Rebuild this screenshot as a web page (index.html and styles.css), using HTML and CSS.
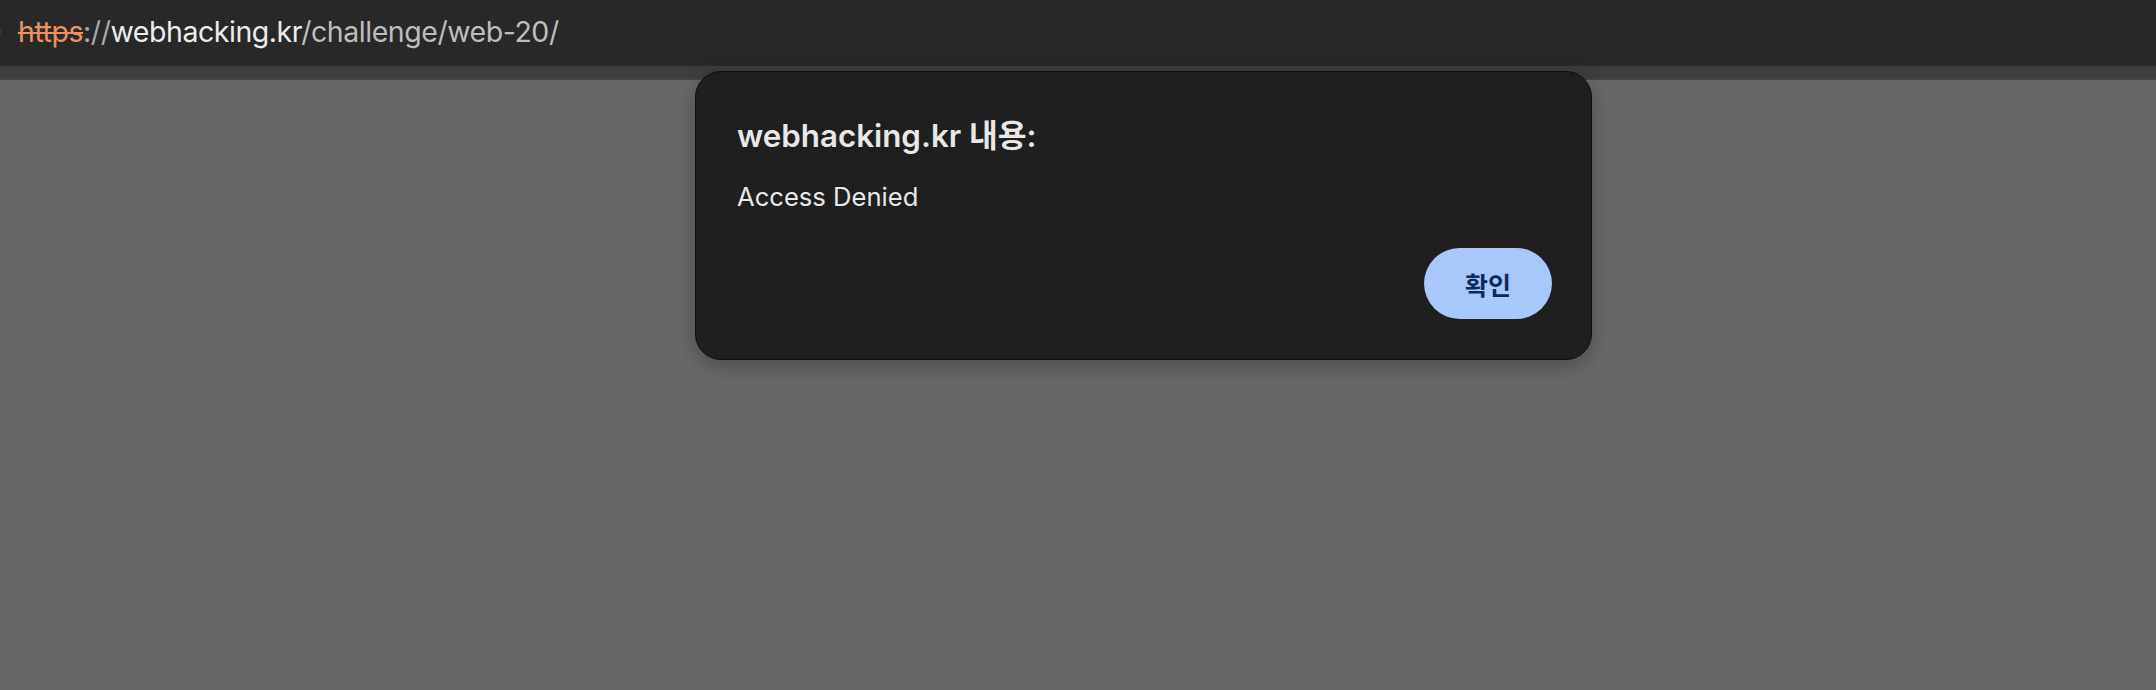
FILE: index.html
```html
<!DOCTYPE html>
<html lang="ko">
<head>
<meta charset="utf-8">
<title>webhacking.kr</title>
<link rel="stylesheet" href="styles.css">
</head>
<body>
  <header class="toolbar">
    <div class="omnibox">
      <svg class="site-icon" width="24" height="24" viewBox="0 0 24 24"><circle cx="12" cy="12" r="9" fill="none" stroke="#3c3c3c" stroke-width="2"/></svg>
      <span class="url"><span class="scheme">https</span><span class="sep">://</span><span class="host">webhacking.kr</span><span class="path">/challenge/web-20/</span></span>
    </div>
  </header>
  <div class="strip"></div>
  <main class="page"></main>

  <div class="dialog" role="alertdialog">
    <h1 class="dialog-title">webhacking.kr 내용:</h1>
    <p class="dialog-message">Access Denied</p>
    <div class="dialog-actions">
      <button class="btn-ok">확인</button>
    </div>
  </div>
</body>
</html>
```

FILE: styles.css
```css
html, body {
  margin: 0;
  padding: 0;
  height: 100%;
}
body {
  background: #686868;
  font-family: "Inter", "Liberation Sans", "Noto Sans CJK KR", sans-serif;
  display: flex;
  flex-direction: column;
  overflow: hidden;
}
.toolbar {
  height: 66px;
  background: #282828;
  display: flex;
  align-items: center;
  flex: none;
}
.omnibox {
  display: flex;
  align-items: center;
  height: 100%;
}
.site-icon {
  margin-left: -21px;
  margin-right: 15px;
  margin-top: -2px;
}
.url {
  font-size: 28.5px;
  letter-spacing: -0.45px;
  line-height: 40px;
  color: #bdbdbd;
  margin-top: -2px;
  white-space: nowrap;
}
.scheme {
  color: #ee9064;
  text-decoration: line-through;
  text-decoration-thickness: 2px;
}
.sep { color: #a9a9a9; }
.host { color: #ececec; }
.path { color: #bdbdbd; }
.strip {
  height: 12px;
  background: #3d3d3d;
  border-bottom: 2px solid #454545;
  flex: none;
}
.page {
  flex: 1;
  background: #686868;
}
.dialog {
  position: absolute;
  left: 695px;
  top: 71px;
  box-sizing: border-box;
  width: 897px;
  height: 289px;
  background: #1f1f1f;
  border: 1px solid #0e0e0e;
  border-radius: 26px;
  box-shadow: 0 6px 22px rgba(0, 0, 0, 0.28);
  padding: 44px 39px 40px 41px;
  display: flex;
  flex-direction: column;
}
.dialog-title {
  margin: 0;
  font-size: 31.3px;
  line-height: 40px;
  font-weight: 600;
  color: #e8e8e8;
}
.dialog-message {
  margin: 24px 0 0;
  font-size: 25.6px;
  line-height: 34px;
  color: #e8e8e8;
}
.dialog-actions {
  margin-top: 34px;
  display: flex;
  justify-content: flex-end;
}
.btn-ok {
  width: 128px;
  height: 71px;
  border: none;
  border-radius: 36px;
  background: #a8c7fa;
  color: #0b2a5f;
  font-family: "Noto Sans CJK KR", "Inter", sans-serif;
  font-size: 25px;
  font-weight: 700;
  padding: 0;
}
```
